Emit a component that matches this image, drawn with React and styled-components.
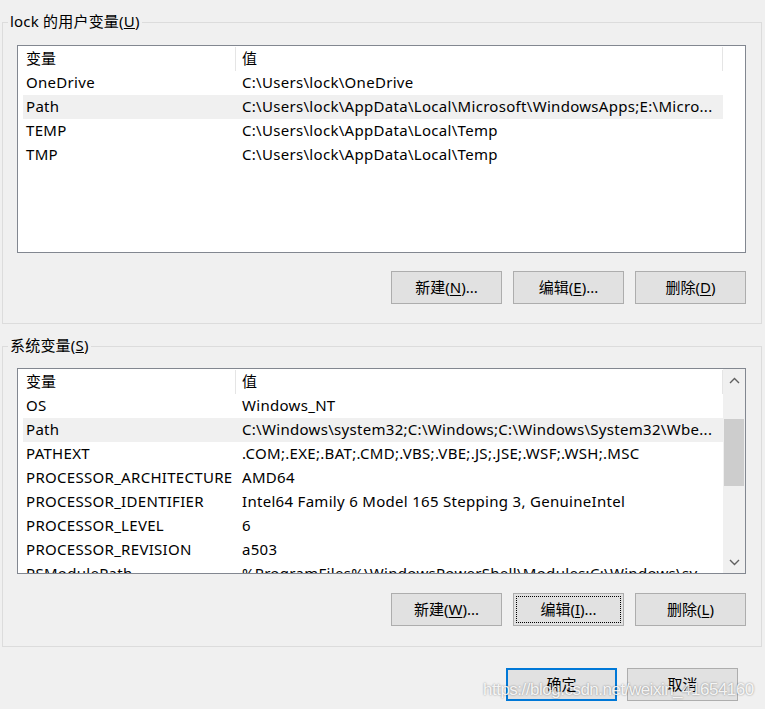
import React from "react";
import styled, { createGlobalStyle } from "styled-components";

const Global = createGlobalStyle`
  html, body { margin: 0; padding: 0; background: #f0f0f0; }
  body { width: 765px; height: 709px; overflow: hidden; }
  * { box-sizing: border-box; }
`;

const FONT = `"Noto Sans", "Noto Sans CJK SC", sans-serif`;

const Page = styled.div`
  position: relative;
  width: 765px;
  height: 709px;
  display: flex;
  flex-direction: column;
  font-family: ${FONT};
  font-size: 15px;
  color: #000;
  background: #f0f0f0;
`;

const Group = styled.fieldset`
  margin: ${(p) => p.$top}px 3px 0 2px;
  padding: ${(p) => p.$padTop}px 15px ${(p) => p.$padBottom}px 14px;
  border: 1px solid #dcdcdc;
  min-width: 0;
  display: flex;
  flex-direction: column;
`;

const Legend = styled.legend`
  margin-left: -9px;
  padding: 0 2px;
  height: 20px;
  line-height: 19px;
  font-size: 15px;
  letter-spacing: 0.2px;
`;

const ListBox = styled.div`
  width: 729px;
  height: ${(p) => p.$height}px;
  border: 1px solid #828790;
  background: #fff;
  display: flex;
  overflow: hidden;
`;

const Rows = styled.div`
  width: 705px;
  flex: none;
  padding: 1px 0 0 5px;
  display: flex;
  flex-direction: column;
`;

const Row = styled.div`
  display: flex;
  height: 24px;
  flex: none;
  background: ${(p) => (p.$selected ? "#f0f0f0" : "transparent")};
`;

const HeaderCell = styled.div`
  width: ${(p) => p.$w}px;
  height: 24px;
  line-height: 22px;
  padding-left: ${(p) => p.$pad}px;
  border-right: 1px solid #e5e5e5;
  flex: none;
`;

const Cell = styled.div`
  width: ${(p) => p.$w}px;
  height: 24px;
  padding-left: ${(p) => p.$pad}px;
  padding-right: 2px;
  flex: none;
  white-space: nowrap;
  overflow: hidden;
  line-height: 22px;
  letter-spacing: 0.3px;
`;

const ScrollBar = styled.div`
  width: 22px;
  flex: none;
  background: #f0f0f0;
  display: flex;
  flex-direction: column;
`;

const ArrowBtn = styled.div`
  height: 22px;
  display: flex;
  align-items: center;
  justify-content: center;
  flex: none;
`;

const Track = styled.div`
  flex: 1;
  display: flex;
  flex-direction: column;
`;

const Thumb = styled.div`
  margin: 28px 1px 0 1px;
  height: 67px;
  background: #cdcdcd;
`;

const ButtonRow = styled.div`
  display: flex;
  justify-content: flex-end;
  gap: ${(p) => p.$gap}px;
  margin-top: ${(p) => p.$top}px;
  padding-right: ${(p) => p.$right || 0}px;
`;

const Button = styled.button`
  width: 111px;
  height: 33px;
  background: #e1e1e1;
  border: ${(p) => (p.$default ? "2px solid #0078d7" : "1px solid #adadad")};
  border-radius: 0;
  font-family: ${FONT};
  font-size: 15px;
  line-height: 20px;
  padding: 0 0 2px 0;
  color: #000;
  outline: ${(p) => (p.$focus ? "1px dotted #000" : "none")};
  outline-offset: -4px;
  u { text-decoration: underline; text-underline-offset: 2px; }
`;

const Watermark = styled.div`
  position: absolute;
  left: 483px;
  top: 680px;
  font-family: "Liberation Sans", Arial, sans-serif;
  font-size: 17px;
  letter-spacing: -0.5px;
  color: rgba(255, 255, 255, 0.9);
  text-shadow: 0 0 2px rgba(0, 0, 0, 0.45);
  white-space: nowrap;
  pointer-events: none;
`;

const Chevron = ({ up }) => (
  <svg width="11" height="7" viewBox="0 0 11 7">
    <polyline
      points={up ? "1,6 5.5,1.5 10,6" : "1,1 5.5,5.5 10,1"}
      fill="none"
      stroke="#606060"
      strokeWidth="1.4"
    />
  </svg>
);

const userVars = [
  ["OneDrive", "C:\\Users\\lock\\OneDrive"],
  ["Path", "C:\\Users\\lock\\AppData\\Local\\Microsoft\\WindowsApps;E:\\Micro..."],
  ["TEMP", "C:\\Users\\lock\\AppData\\Local\\Temp"],
  ["TMP", "C:\\Users\\lock\\AppData\\Local\\Temp"],
];

const sysVars = [
  ["OS", "Windows_NT"],
  ["Path", "C:\\Windows\\system32;C:\\Windows;C:\\Windows\\System32\\Wbe..."],
  ["PATHEXT", ".COM;.EXE;.BAT;.CMD;.VBS;.VBE;.JS;.JSE;.WSF;.WSH;.MSC"],
  ["PROCESSOR_ARCHITECTURE", "AMD64"],
  ["PROCESSOR_IDENTIFIER", "Intel64 Family 6 Model 165 Stepping 3, GenuineIntel"],
  ["PROCESSOR_LEVEL", "6"],
  ["PROCESSOR_REVISION", "a503"],
  ["PSModulePath", "%ProgramFiles%\\WindowsPowerShell\\Modules;C:\\Windows\\sy..."],
];

const VarList = ({ items, height, scroll }) => (
  <ListBox $height={height}>
    <Rows>
      <Row>
        <HeaderCell $w={213} $pad={3}>变量</HeaderCell>
        <HeaderCell $w={487} $pad={6}>值</HeaderCell>
      </Row>
      {items.map(([k, v]) => (
        <Row key={k} $selected={k === "Path"}>
          <Cell $w={213} $pad={3}>{k}</Cell>
          <Cell $w={487} $pad={6}>{v}</Cell>
        </Row>
      ))}
    </Rows>
    {scroll && (
      <ScrollBar>
        <ArrowBtn><Chevron up /></ArrowBtn>
        <Track><Thumb /></Track>
        <ArrowBtn><Chevron /></ArrowBtn>
      </ScrollBar>
    )}
  </ListBox>
);

export default function App() {
  return (
    <Page>
      <Global />
      <Group $top={12} $padTop={13} $padBottom={19}>
        <Legend>lock 的用户变量(<u>U</u>)</Legend>
        <VarList items={userVars} height={208} />
        <ButtonRow $gap={11} $top={18}>
          <Button>新建(<u>N</u>)...</Button>
          <Button>编辑(<u>E</u>)...</Button>
          <Button>删除(<u>D</u>)</Button>
        </ButtonRow>
      </Group>
      <Group $top={12} $padTop={12} $padBottom={20}>
        <Legend>系统变量(<u>S</u>)</Legend>
        <VarList items={sysVars} height={206} scroll />
        <ButtonRow $gap={11} $top={19}>
          <Button>新建(<u>W</u>)...</Button>
          <Button $focus>编辑(<u>I</u>)...</Button>
          <Button>删除(<u>L</u>)</Button>
        </ButtonRow>
      </Group>
      <ButtonRow $gap={10} $top={21} $right={27}>
        <Button $default>确定</Button>
        <Button>取消</Button>
      </ButtonRow>
      <Watermark>https://blog.csdn.net/weixin_41654160</Watermark>
    </Page>
  );
}
